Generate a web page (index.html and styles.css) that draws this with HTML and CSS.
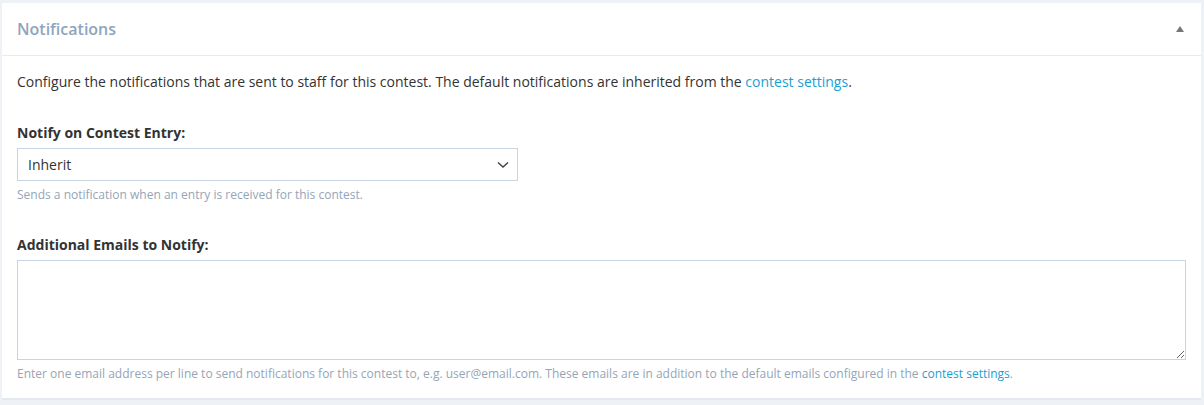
FILE: index.html
```html
<!DOCTYPE html>
<html lang="en">
  <head>
    <meta charset="UTF-8" />
    <meta name="viewport" content="width=device-width, initial-scale=1.0" />
    <title>Notifications</title>
    <link rel="stylesheet" href="styles.css">
  </head>
  <body>
    <div class="panel">
      <div class="panel_heading">
        <h3 class="panel_title">Notifications</h3>
        <span class="caret"></span>
      </div>
      <div class="panel_body">
        <p class="intro">
          Configure the notifications that are sent to staff for this contest. The default notifications are inherited from the
          <a href="#">contest settings</a>.
        </p>
        <div class="field">
          <label for="notify_entry">Notify on Contest Entry:</label>
          <div class="select_wrap">
            <select id="notify_entry" name="notify_entry">
              <option selected>Inherit</option>
              <option>Yes</option>
              <option>No</option>
            </select>
            <svg class="chevron" width="12" height="8" viewBox="0 0 12 8">
              <path d="M1 1.5 L6 6 L11 1.5" fill="none" stroke="#444" stroke-width="1.5" />
            </svg>
          </div>
          <div class="help">Sends a notification when an entry is received for this contest.</div>
        </div>
        <div class="field">
          <label for="emails">Additional Emails to Notify:</label>
          <textarea id="emails" name="emails"></textarea>
          <div class="help">
            Enter one email address per line to send notifications for this contest to, e.g. user@email.com. These emails are in addition to the default emails configured in the
            <a href="#">contest settings</a>.
          </div>
        </div>
      </div>
    </div>
  </body>
</html>
```

FILE: styles.css
```css
* {
  margin: 0;
  padding: 0;
  box-sizing: border-box;
}
body {
  font-family: "Open Sans", Arial, sans-serif;
  background-color: #eef2f6;
  padding: 3px 3px 0 2px;
  color: #333;
}
a {
  color: #1a9fd4;
  text-decoration: none;
}

.panel {
  background-color: #fff;
  border-bottom: 2px solid #e4e9ef;
}
.panel_heading {
  display: flex;
  justify-content: space-between;
  align-items: center;
  height: 53px;
  padding: 0 15px;
  border-bottom: 1px solid #e6ebf0;
}
.panel_title {
  font-size: 16px;
  font-weight: 600;
  color: #8da5bd;
}
.caret {
  width: 0;
  height: 0;
  margin-right: 2px;
  border-left: 4px solid transparent;
  border-right: 4px solid transparent;
  border-bottom: 6px solid #777;
}

.panel_body {
  padding: 16px 15px 16px;
}
.intro {
  font-size: 14px;
  line-height: 20px;
  margin-bottom: 31px;
}
.field {
  margin-bottom: 32px;
}
.field:last-child {
  margin-bottom: 0;
}
label {
  display: block;
  font-size: 14px;
  font-weight: 700;
  line-height: 20px;
  margin-bottom: 5px;
  color: #333;
}
.select_wrap {
  position: relative;
  width: 501px;
}
select {
  width: 100%;
  height: 33px;
  padding: 0 10px;
  border: 1px solid #c8d4df;
  border-radius: 0;
  background: #fff;
  font-family: inherit;
  font-size: 14px;
  color: #333;
  appearance: none;
}
.chevron {
  position: absolute;
  right: 9px;
  top: 13px;
  pointer-events: none;
}
textarea {
  display: block;
  width: 100%;
  height: 100px;
  border: 1px solid #c8d4df;
  font-family: inherit;
  font-size: 14px;
  resize: vertical;
}
.help {
  font-size: 12px;
  line-height: 17px;
  margin-top: 5px;
  color: #95a5b8;
}
```
